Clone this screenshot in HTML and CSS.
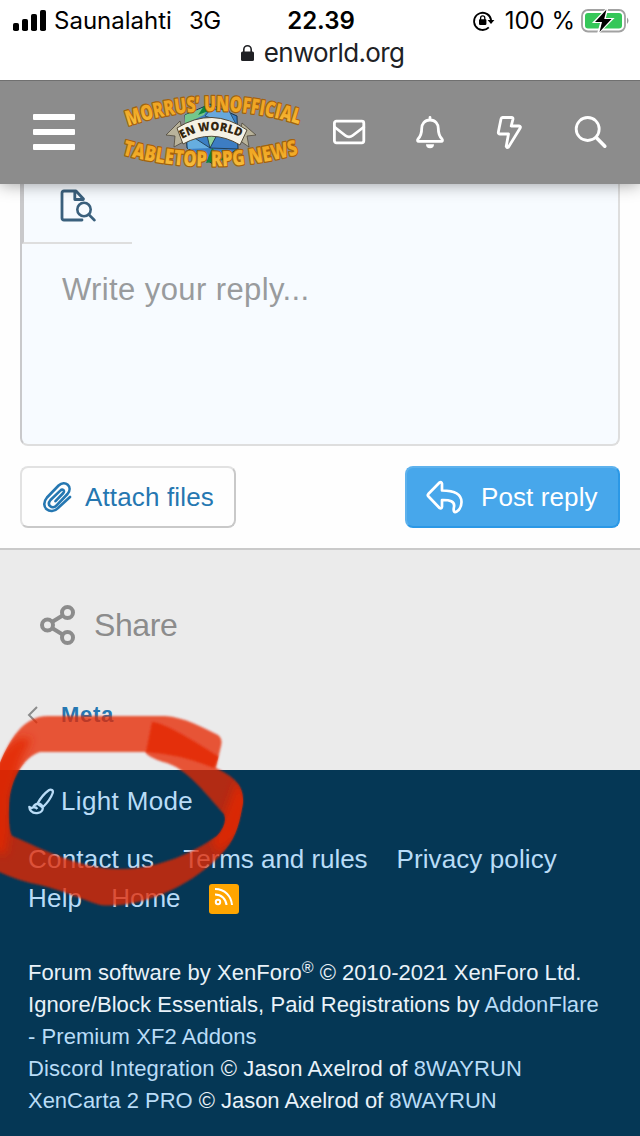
FILE: index.html
```html
<!DOCTYPE html>
<html lang="en">
<head>
<meta charset="utf-8">
<title>EN World</title>
<link rel="stylesheet" href="styles.css">
</head>
<body>
<div class="screen">
  <div class="browser">
    <div class="status">
      <div class="status-left">
        <svg width="34" height="22" viewBox="0 0 34 22"><rect x="0" y="13" width="6" height="8" rx="1.8"/><rect x="9" y="9" width="6" height="12" rx="1.8"/><rect x="18" y="4" width="6" height="17" rx="1.8"/><rect x="27" y="0" width="6" height="21" rx="1.8"/></svg>
        <span class="carrier">Saunalahti</span><span class="network">3G</span>
      </div>
      <span class="clock">22.39</span>
      <div class="status-right">
        <svg width="22" height="20" viewBox="0 0 22 20"><path d="M15.8 16.400A8.600 8.600 0 1 1 18.200 9.500" fill="none" stroke="#000" stroke-width="1.800"/><path d="M14.600 9h6.800L18 13z"/><rect x="6" y="8.300" width="7.400" height="5.600" rx=".8"/><path d="M7.600 9V7a2.100 2.100 0 0 1 4.200 0v2" fill="none" stroke="#000" stroke-width="1.300"/></svg>
        <span class="percent">100 %</span>
        <svg class="battery" width="48" height="26" viewBox="0 0 48 26"><rect x="1" y="2" width="43" height="21.500" rx="6" fill="none" stroke="#a2a2a2" stroke-width="1.800"/><rect x="4" y="5" width="37" height="15.500" rx="3" fill="#35c759"/><path d="M46 9.500q3 3 0 6.500z" fill="#999"/><path d="M26 1L13.500 14h7L17.500 24.500 31 11h-7.500z" stroke="#fff" stroke-width="2.200"/><path d="M25.500 1.500L14 14h7L18.500 24 30.500 11h-7.300z"/></svg>
      </div>
    </div>
    <div class="address">
      <svg width="13" height="17" viewBox="0 0 13 17"><rect y="6.500" width="13" height="9.500" rx="1.500"/><path d="M2.800 7V4.500a3.700 3.700 0 0 1 7.400 0V7" fill="none" stroke="#202125" stroke-width="1.600"/></svg>
      <span>enworld.org</span>
    </div>
  </div>

  <header class="nav">
    <div class="menu"><i></i><i></i><i></i></div>
    <svg class="logo" width="184" height="84" viewBox="0 0 184 84">
      <defs>
        <linearGradient id="gold" x1="0" y1="0" x2="0" y2="1"><stop offset="0" stop-color="#eda126"/><stop offset=".5" stop-color="#f0a824"/><stop offset="1" stop-color="#fbc94a"/></linearGradient>
        <path id="arc-top" d="M7 34Q91 5 177 32"/>
        <path id="arc-mid" d="M61 47Q90 30 123 47"/>
        <path id="arc-low" d="M1 62.500Q90 87 179 61.500"/>
      </defs>
      <path d="M64 23L89 12 116 24 117 57 92 72 66 56z" fill="#3b7fc4" stroke="#16344b"/>
      <path d="M64 23L89 13 83 23 64 32z" fill="#74c78b"/><path d="M83 14l5-1 2 5-13 5z" fill="#118440"/>
      <path d="M89 18l18-1 9 17-32-10z" fill="#66a8dd" stroke="#23465b" stroke-width=".8"/>
      <path d="M66 41L89 56 67 57z" fill="#66aee0"/><path d="M85 39h13L89 56z" fill="#8fd29b"/><path d="M98 39l-9 17 28 1z" fill="#3d7dc3"/><path d="M91 56l12 12-18 3z" fill="#118440"/>
      <path d="M66 41l23 15 9-17M89 56l28 1M89 56l-4-17" fill="none" stroke="#1a3140" stroke-width=".8"/>
      <path d="M59 29L45 43l9 1-1 11 11-6zM121 31l14 12-9 1 2 11-10-7z" fill="#b9b39b" stroke="#4f493b" stroke-width=".8"/>
      <path d="M56 36Q91 14 126 38L119 53Q91 36 62 52z" fill="#f5f2e5" stroke="#514937"/>
      <text class="logo-mid"><textPath href="#arc-mid" textLength="61" lengthAdjust="spacingAndGlyphs">EN WORLD</textPath></text>
      <g class="logo-gold">
        <text><textPath href="#arc-top" textLength="174" lengthAdjust="spacingAndGlyphs">MORRUS’ UNOFFICIAL</textPath></text>
        <text><textPath href="#arc-low" textLength="179" lengthAdjust="spacingAndGlyphs">TABLETOP RPG NEWS</textPath></text>
      </g>
    </svg>
    <div class="nav-icons">
      <svg width="34" height="34" viewBox="0 0 34 34"><rect x="2.400" y="6.200" width="29.400" height="21.600" rx="2"/><path d="M2.500 12l10.800 8.500q3.700 2.800 7.400 0L31.800 12"/></svg>
      <svg width="34" height="34" viewBox="0 0 34 34"><path d="M17 2.500v2.500M17 5c-5.500 0-8.300 4-8.300 8.500 0 6-1.200 8-3.700 10.500-.900 1.300-.5 2.400.8 2.400h22.400c1.300 0 1.700-1.100.8-2.400-2.500-2.500-3.700-4.500-3.700-10.500C25.300 9 22.500 5 17 5z"/><path d="M13 29.300h8a4 4 0 0 1-8 0z" fill="#fff" stroke="none"/></svg>
      <svg width="34" height="34" viewBox="0 0 34 34"><path d="M9.500 2.500h9q1.800 0 1.400 1.800L18.200 11H26q2 .2 1.200 2L15.500 32q-1.800 1.300-2.300-.500l2.300-12.500H7q-1.800 0-1.700-1.800L8 4q.3-1.500 1.500-1.500z"/></svg>
      <svg width="34" height="34" viewBox="0 0 34 34"><circle cx="13.700" cy="14" r="11.500"/><path d="M22.200 22.600l8.600 8.600" stroke-width="3.600"/></svg>
    </div>
  </header>

  <main class="reply">
    <div class="editor">
      <div class="toolbar">
        <svg width="38" height="34" viewBox="0 0 38 34"><path d="M22 31H4q-2 0-2-2V4q0-2 2-2h12l7.500 8M14.800 2v8.500h8.500" stroke-width="2.800"/><circle cx="24" cy="20.500" r="6.700"/><path d="M29 25.800l5.500 5.400"/></svg>
      </div>
      <div class="placeholder">Write your reply...</div>
    </div>
    <div class="actions">
      <div class="button attach">
        <svg width="32" height="34" viewBox="0 0 32 34"><path d="M13.500 21.200l7.800-8.200c2-2.400-.8-4.700-3-2.400L8.500 20c-4.300 5.200 1.800 9.800 5.800 5.700L25.500 14c6-7.300-2.400-14.500-8.900-8.500L5 17.500c-8 9.500 3.400 18.500 11.300 10.300L28 17"/></svg>
        <span>Attach files</span>
      </div>
      <div class="button post">
        <svg width="38" height="34" viewBox="0 0 38 34"><path d="M13.300 2.700L2.300 14q-1 1.200 0 2.300l11 11.500q2.300 1.500 2.700-1V20c7-.2 13.800 1 11.800 8-.6 3.500.5 5 3 3.500 3-2 4.700-6 4.700-9.500C35.500 14 28 10.500 16 10.500V3.800q-.4-2.600-2.700-1.100z"/></svg>
        <span>Post reply</span>
      </div>
    </div>
  </main>

  <section class="below">
    <div class="share">
      <svg width="36" height="40" viewBox="0 0 36 40"><path d="M12 17l11-6.700M12 23l11 6.700"/><circle cx="7.500" cy="20" r="5.500"/><circle cx="27.500" cy="7.500" r="5.500"/><circle cx="27.500" cy="32.500" r="5.500"/></svg>
      <span>Share</span>
    </div>
    <div class="crumb">
      <svg width="10" height="18" viewBox="0 0 10 18"><path d="M9 1L1 9l8 8"/></svg>
      <b>Meta</b>
    </div>
  </section>

  <footer class="footer">
    <div class="mode">
      <svg width="27" height="27" viewBox="0 0 27 27"><path d="M9.500 15.500C13 9.500 17 5 20.800 2.300c2.300-1.600 4.800 0 3.900 2.700-1.500 4.300-5 9.500-9.700 14"/><path d="M9.500 15.800c3-.3 5.600 1.600 5.300 4.700-.5 4.500-8 6.500-11.800 2.500-1.200-1.300-1.600-2.500-1.700-4 2 1.500 3.500 1.200 4.200-.4.800-1.700 2-2.600 4-2.800z"/><path d="M5.500 19.300c1.600-.3 2.800.2 3.800 1.700M9.500 15.800l5.300 3.700"/></svg>
      <span>Light Mode</span>
    </div>
    <div class="links"><a>Contact us</a><a>Terms and rules</a><a>Privacy policy</a></div>
    <div class="links second"><a>Help</a><a>Home</a>
      <svg class="rss" width="30" height="30" viewBox="0 0 30 30"><rect width="30" height="30" rx="3" fill="#ffa500"/><circle cx="9" cy="18" r="2.200"/><path d="M6 10.500c6.500 0 11 4.500 11.500 10.500M6 5c10 .2 16.300 7 17 16"/></svg>
    </div>
    <div class="copyright">
      <p class="l1">Forum software by XenForo<sup>®</sup> © 2010-2021 XenForo Ltd.</p>
      <p class="l2">Ignore/Block Essentials, Paid Registrations by <a>AddonFlare</a></p>
      <p class="l3"><a>- Premium XF2 Addons</a></p>
      <p class="l4"><a>Discord Integration</a> © Jason Axelrod of <a>8WAYRUN</a></p>
      <p class="l5"><a>XenCarta 2 PRO</a> © Jason Axelrod of <a>8WAYRUN</a></p>
    </div>
  </footer>

  <svg class="marker" width="260" height="220" viewBox="0 700 260 220">
    <defs>
      <filter id="soft" x="-10%" y="-10%" width="120%" height="120%"><feGaussianBlur stdDeviation=".9"/></filter>
      <filter id="softer" x="-40%" y="-40%" width="180%" height="180%"><feGaussianBlur stdDeviation="4"/></filter>
      <clipPath id="ring"><path clip-rule="evenodd" d="M-5 775C7 745 20 716 48 716H165C184 717 204 728 218 735Q223 739 221 746L216 768C234 777 244 785 243 803C240 820 237 836 225 850C205 874 172 893 142 901Q118 907 100 905C78 898 64 891 40 885Q18 881-5 870zM40 752C23 757 9 782 9 806Q8 830 12 836C45 850 82 870 123 869C161 868 194 852 217 836Q228 824 224 814C207 796 187 767 163 762Q148 757 145 752z"/></clipPath>
    </defs>
    <path class="ink" filter="url(#soft)" fill-rule="evenodd" d="M-5 775C7 745 20 716 48 716H165C184 717 204 728 218 735Q223 739 221 746L216 768C234 777 244 785 243 803C240 820 237 836 225 850C205 874 172 893 142 901Q118 907 100 905C78 898 64 891 40 885Q18 881-5 870zM40 752C23 757 9 782 9 806Q8 830 12 836C45 850 82 870 123 869C161 868 194 852 217 836Q228 824 224 814C207 796 187 767 163 762Q148 757 145 752z"/>
    <g clip-path="url(#ring)">
      <path class="dense" filter="url(#softer)" d="M-10 850V760L18 738 32 738 22 758 11 795 10 830 6 855z"/>
      <path class="dense" filter="url(#softer)" d="M225 813L237 780 250 800 240 835 218 853 212 842z"/>
      <path class="dense" filter="url(#soft)" d="M152 722Q165 722 219 757L214 768Q180 754 146 752z"/>
    </g>
  </svg>
</div>
</body>
</html>
```
FILE: styles.css
```css
* { box-sizing: border-box; }
body { margin: 0; background: #fefefe; font-family: "Liberation Sans", Arial, sans-serif; }
svg { display: block; flex: none; overflow: visible; }
span, a, b { white-space: nowrap; }
.screen { position: relative; width: 640px; height: 1136px; overflow: hidden; display: flex; flex-direction: column; }
.browser { position: relative; z-index: 2; height: 80px; flex: none; background: #fff; font-family: Inter, sans-serif; color: #000; }
.status { display: grid; grid-template-columns: 1fr auto 1fr; align-items: center; height: 40px; padding: 1px 11px 0 13px; font-size: 24px; line-height: 40px; }
.status-left, .status-right { display: flex; align-items: center; }
.status-left svg { margin-top: -1px; }
.status-right { justify-content: flex-end; }
.carrier { margin-left: 7px; letter-spacing: 0; }
.network { margin-left: 17px; letter-spacing: -.4px; }
.clock { font-weight: 600; }
.percent { margin-left: 10px; }
.battery { margin-left: 6px; }
.address { display: flex; justify-content: center; align-items: center; gap: 10px; height: 26px; margin-left: 5px; font-size: 26px; line-height: 26px; letter-spacing: -.65px; color: #202125; }
.address svg { fill: #202125; }
.nav { position: relative; z-index: 1; flex: none; height: 104px; display: flex; align-items: center; padding: 0 32px 2px 33px; background: #8c8c8c; border-top: 1px solid #707070; box-shadow: 0 0 16px rgba(0,0,0,.4); }
.menu { display: grid; gap: 9px; width: 42px; }
.menu i { height: 6px; border-radius: 1px; background: #fff; }
.logo { margin: 4px 0 0 46px; }
.logo text { font-family: "Open Sans", sans-serif; font-weight: 800; }
.logo-mid { font-size: 12px; fill: #33260f; }
.logo-gold { font-size: 21px; fill: url(#gold); stroke: #a4620c; stroke-width: 2.5px; paint-order: stroke; stroke-linejoin: round; }
.nav-icons { flex: 1; display: flex; justify-content: space-between; margin-left: 27px; }
.nav-icons svg { fill: none; stroke: #fff; stroke-width: 2.8; stroke-linejoin: round; stroke-linecap: round; }
.reply { flex: none; height: 366px; padding: 0 20px 20px; display: flex; flex-direction: column; gap: 20px; border-bottom: 2px solid #cacaca; }
.editor { height: 262px; background: #f7fbff; border: 2px solid #dedede; border-top: 0; border-left-color: #c9c9cb; border-radius: 0 0 8px 8px; }
.toolbar { width: 110px; height: 60px; padding: 5px 0 0 36px; border-left: 2px solid #c9c9cb; border-bottom: 2px solid #dedede; }
.toolbar svg { fill: none; stroke: #3a607d; stroke-width: 2.600; stroke-linejoin: round; stroke-linecap: round; }
.placeholder { padding: 27px 40px; font-size: 31px; line-height: 38px; letter-spacing: .4px; color: #999b9d; }
.actions { display: flex; justify-content: space-between; }
.button { display: flex; align-items: center; height: 62px; border: 2px solid; border-radius: 8px; font-size: 26px; }
.button svg { fill: none; stroke: currentColor; stroke-width: 2.700; stroke-linejoin: round; stroke-linecap: round; }
.attach { width: 216px; padding-left: 20px; gap: 11px; color: #2577b1; background: #fefefe; border-color: #e2e2e2 #c9c9c9 #c9c9c9 #e2e2e2; }
.attach span { letter-spacing: .15px; }
.attach svg { stroke-width: 2.600; }
.post { width: 215px; padding-left: 19px; gap: 17px; color: #fff; background: #47a7eb; border-color: #5eb2ed #2b98e6 #2b98e6 #5eb2ed; }
.post span { letter-spacing: .1px; }
.below { flex: none; height: 220px; padding: 55px 28px 0; background: #ebebeb; }
.share { display: flex; align-items: center; height: 40px; padding-left: 12px; gap: 18px; font-size: 32px; letter-spacing: -.4px; color: #8c8c8c; }
.share svg { fill: none; stroke: #8c8c8c; stroke-width: 4; }
.crumb { display: flex; align-items: center; height: 26px; margin-top: 57px; gap: 23px; font-size: 22px; letter-spacing: .7px; color: #2577b1; }
.crumb svg { fill: none; stroke: #8c8c8c; stroke-width: 2; }
.footer { flex: 1; padding: 16px 28px 0; background: #053755; color: #e9f2f9; }
.footer a, .mode { color: #b9dcf7; }
.mode { display: flex; align-items: center; height: 30px; gap: 6px; font-size: 26px; letter-spacing: .35px; }
.mode svg { fill: none; stroke: #b9dcf7; stroke-width: 2.300; stroke-linejoin: round; }
.links { display: flex; align-items: center; height: 30px; margin-top: 28px; gap: 29px; font-size: 26px; }
.links a:first-child { letter-spacing: .2px; }
.links a:nth-child(2) { letter-spacing: -.05px; }
.links a:nth-child(3) { letter-spacing: .1px; }
.second { margin-top: 10px; }
.second a { margin-top: -2px; }
.rss circle, .rss path { fill: none; stroke: #fff; stroke-width: 2; }
.copyright { margin-top: 43px; font-size: 22px; line-height: 32px; }
.copyright p { margin: 0; height: 32px; white-space: nowrap; }
.copyright sup { font-size: 16px; line-height: 0; vertical-align: 7px; }
.l1 { letter-spacing: .04px; }
.l2 { letter-spacing: .06px; }
.l3 { letter-spacing: .06px; }
.l4 { letter-spacing: .1px; }
.l5 { letter-spacing: -.03px; }
.marker { position: absolute; left: 0; top: 700px; z-index: 2; overflow: hidden; }
.ink { fill: #e62800; fill-opacity: .77; }
.dense { fill: #e32600; fill-opacity: .8; }
```
